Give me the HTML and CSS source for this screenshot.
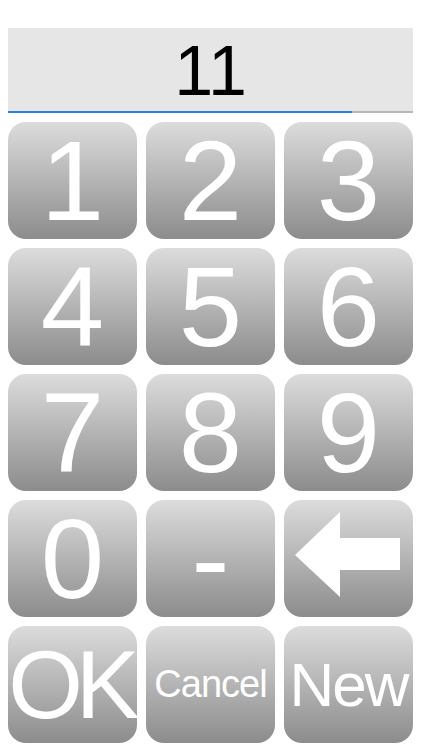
FILE: index.html
```html
<!DOCTYPE html>
<html>
<head>
<meta charset="utf-8">
<link rel="stylesheet" href="styles.css">
</head>
<body>
<div class="app">
  <div class="display">
    <div class="value">11</div>
    <div class="underline"><div class="underline-fill"></div></div>
  </div>
  <div class="pad">
    <div class="key digit">1</div>
    <div class="key digit">2</div>
    <div class="key digit">3</div>
    <div class="key digit">4</div>
    <div class="key digit">5</div>
    <div class="key digit">6</div>
    <div class="key digit">7</div>
    <div class="key digit">8</div>
    <div class="key digit">9</div>
    <div class="key digit">0</div>
    <div class="key digit">-</div>
    <div class="key">
      <svg class="arrow" viewBox="0 0 129 117" width="129" height="117">
        <polygon points="11,55 56,12 56,38 116,38 116,70 56,70 56,97" fill="#ffffff"/>
      </svg>
    </div>
    <div class="key ok">OK</div>
    <div class="key cancel">Cancel</div>
    <div class="key new">New</div>
  </div>
</div>
</body>
</html>
```
FILE: styles.css
```css
html, body {
  margin: 0;
  padding: 0;
  background: #ffffff;
}
body {
  font-family: "Liberation Sans", Arial, sans-serif;
}
.app {
  padding: 28px 9px 0 8px;
  width: 405px;
}
.display {
  background: #e6e6e6;
  height: 85px;
  display: flex;
  flex-direction: column;
}
.value {
  flex: 1;
  display: flex;
  align-items: center;
  justify-content: center;
  font-size: 70px;
  color: #000000;
  padding-top: 2px;
}
.underline {
  height: 2px;
  background: #b8b8b8;
}
.underline-fill {
  height: 2px;
  width: 85%;
  background: #2f7fe0;
}
.pad {
  margin-top: 9px;
  display: grid;
  grid-template-columns: repeat(3, 129px);
  grid-auto-rows: 117px;
  gap: 9px;
}
.key {
  border-radius: 18px;
  background: linear-gradient(to bottom, #dcdcdc 0%, #b4b4b4 50%, #8c8c8c 100%);
  color: #ffffff;
  display: flex;
  align-items: center;
  justify-content: center;
  overflow: visible;
  white-space: nowrap;
}
.digit {
  font-size: 114px;
}
.arrow {
  display: block;
}
.ok {
  font-size: 96px;
  letter-spacing: -7px;
  padding-right: 4px;
}
.cancel {
  font-size: 38px;
  letter-spacing: -1px;
}
.new {
  font-size: 62px;
  letter-spacing: -2px;
}
```
